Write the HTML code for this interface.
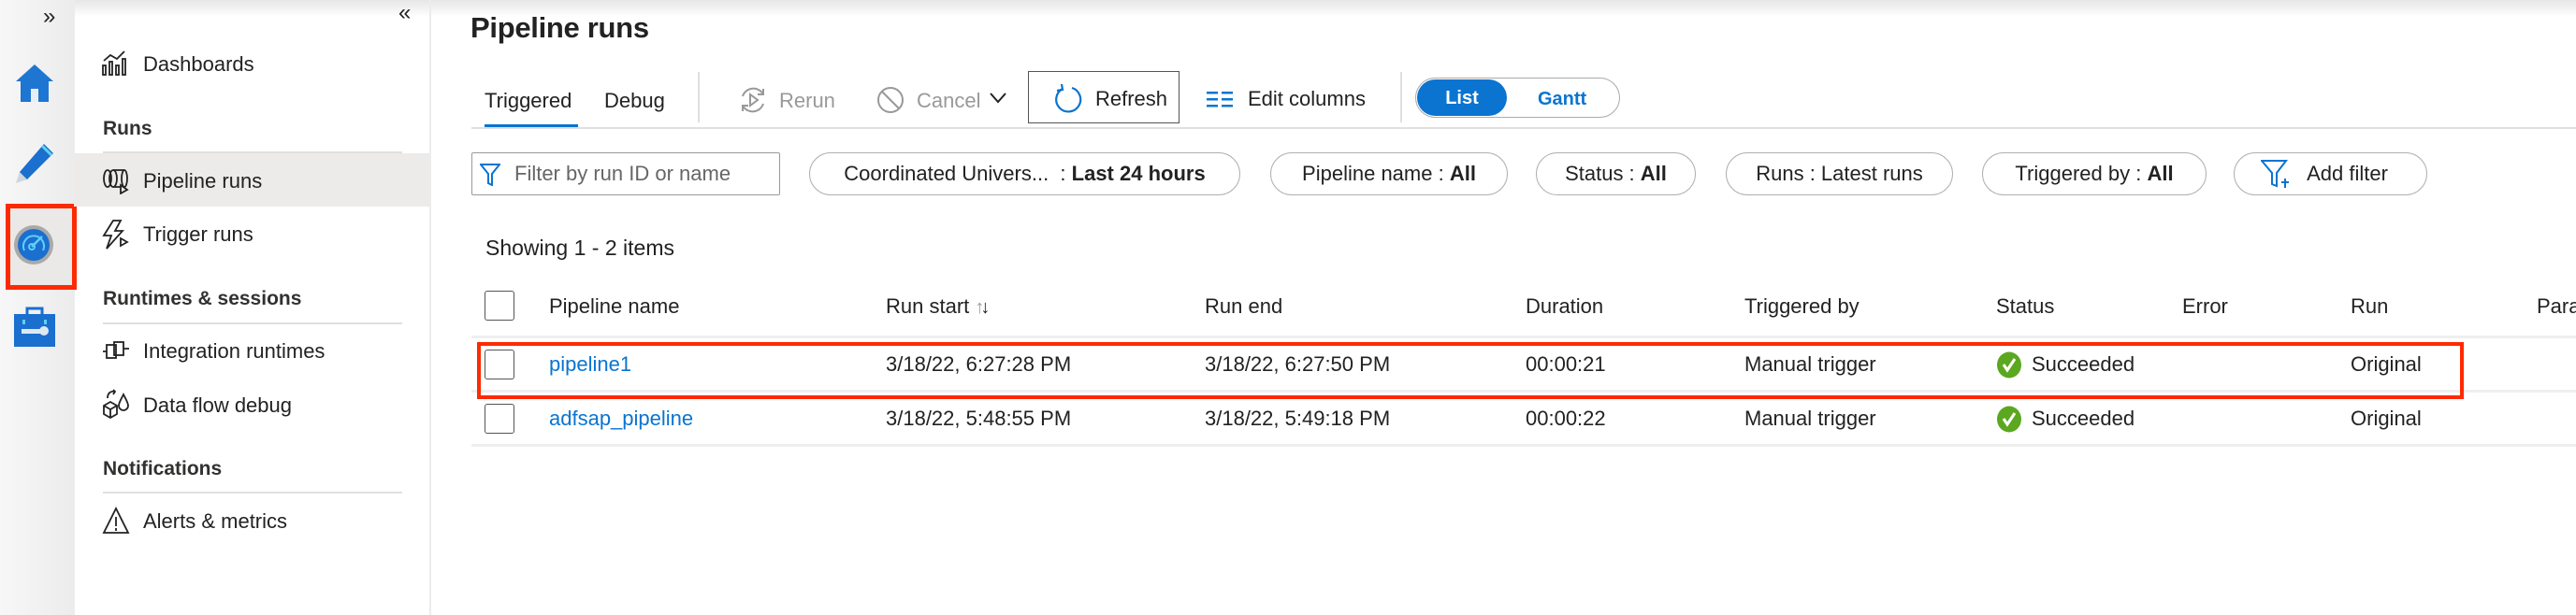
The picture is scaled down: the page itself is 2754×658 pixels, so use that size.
<!DOCTYPE html>
<html><head><meta charset="utf-8"><style>
*{margin:0;padding:0;box-sizing:border-box}
body{width:2754px;height:658px;overflow:hidden;background:#fff;font-family:"Liberation Sans",sans-serif;color:#222;position:relative}
.a{position:absolute;white-space:nowrap}
.t{font-size:22px;line-height:30px}
.h{font-size:21px;font-weight:bold;line-height:30px;color:#323130}
.line{position:absolute;background:#e1dfdd;height:2px}
.pill{position:absolute;top:163px;height:46px;border:1.5px solid #b0b0b0;border-radius:23px;font-size:22px;line-height:43px;text-align:center;color:#222}
.cb{position:absolute;width:32px;height:32px;border:1.5px solid #555;border-radius:3px;background:#fff}
.c{position:absolute;font-size:22px;line-height:30px;white-space:nowrap;color:#222}
.lnk{color:#0a74d0}
</style></head><body>
<div class="a" style="left:0;top:0;width:2754px;height:18px;background:linear-gradient(#e6e6e6,rgba(255,255,255,0))"></div>
<div class="a" style="left:0;top:0;width:80px;height:658px;background:linear-gradient(90deg,#f7f7f7,#ececec)"></div>
<div class="a" style="left:46px;top:4px;font-size:24px;color:#222">»</div>
<svg class="a" style="left:15px;top:67px" width="44" height="43" viewBox="0 0 44 43"><path d="M22 2 L42 20 L37 20 L37 42 L7 42 L7 20 L2 20 Z" fill="#1e76d2"/><rect x="18" y="28" width="8" height="14" fill="#e8eef6"/></svg>
<svg class="a" style="left:15px;top:152px" width="44" height="44" viewBox="0 0 44 44"><path d="M32 2 L42 12 L14 40 L4 42 L6 32 Z" fill="#1a6fcf"/><path d="M30 4 L40 14" stroke="#5fd0f5" stroke-width="3"/><path d="M6 32 L14 40 L2 44 Z" fill="#cfd6de"/></svg>
<div class="a" style="left:6px;top:218px;width:76px;height:92px;background:#eae9e8;border:5px solid #ff2a00"></div>
<svg class="a" style="left:14px;top:240px" width="44" height="44" viewBox="0 0 44 44"><circle cx="22" cy="22" r="21" fill="#a9a9a9"/><circle cx="22" cy="22" r="17" fill="#1a6fcf"/><path d="M12 28 A11 11 0 1 1 32 28" fill="none" stroke="#5fd0f5" stroke-width="2"/><path d="M20 24 L31 13" stroke="#5fd0f5" stroke-width="2.5"/><circle cx="20" cy="24" r="3" fill="none" stroke="#5fd0f5" stroke-width="2"/></svg>
<svg class="a" style="left:15px;top:328px" width="44" height="43" viewBox="0 0 44 43"><path d="M14 8 V2 H30 V8" fill="none" stroke="#1a6fcf" stroke-width="3"/><rect x="0" y="8" width="44" height="35" fill="#1a6fcf"/><rect x="8" y="24" width="22" height="5" fill="#dfe8f2"/><circle cx="32" cy="26" r="5" fill="#dfe8f2"/><rect x="9" y="14" width="3" height="5" fill="#5fd0f5"/><rect x="32" y="14" width="3" height="5" fill="#5fd0f5"/></svg>
<div class="a" style="left:459px;top:0;width:2px;height:658px;background:#ececec"></div>
<div class="a" style="left:426px;top:0;font-size:24px;color:#222">«</div>
<svg class="a" style="left:109px;top:53px" width="28" height="28" viewBox="0 0 28 28" fill="none" stroke="#222" stroke-width="1.8"><rect x="1" y="17" width="3" height="10"/><rect x="8" y="13" width="3" height="14"/><rect x="15" y="17" width="3" height="10"/><rect x="22" y="10" width="3" height="17"/><path d="M2 12 L9 6 L16 10 L24 2"/></svg>
<div class="a t" style="left:153px;top:54px">Dashboards</div>
<div class="a h" style="left:110px;top:123px">Runs</div>
<div class="line" style="left:110px;top:162px;width:320px"></div>
<div class="a" style="left:79px;top:164px;width:380px;height:57px;background:#edebe9"></div>
<svg class="a" style="left:109px;top:180px" width="30" height="28" viewBox="0 0 30 28" fill="none" stroke="#222" stroke-width="1.8"><ellipse cx="6" cy="11" rx="4" ry="9"/><ellipse cx="12" cy="11" rx="4" ry="9"/><path d="M12 2 H24 M12 20 H20"/><ellipse cx="24" cy="11" rx="3" ry="9"/><path d="M20 18 L27 23 L20 27 Z"/></svg>
<div class="a t" style="left:153px;top:179px">Pipeline runs</div>
<svg class="a" style="left:109px;top:235px" width="30" height="32" viewBox="0 0 30 32" fill="none" stroke="#222" stroke-width="1.8"><path d="M12 1 L2 17 H10 L5 31 L22 12 H14 L20 1 Z"/><path d="M20 20 L27 24 L20 28 Z"/></svg>
<div class="a t" style="left:153px;top:236px">Trigger runs</div>
<div class="a h" style="left:110px;top:305px">Runtimes &amp; sessions</div>
<div class="line" style="left:110px;top:345px;width:320px"></div>
<svg class="a" style="left:109px;top:364px" width="30" height="24" viewBox="0 0 30 24" fill="none" stroke="#222" stroke-width="1.8"><rect x="5" y="5" width="10" height="14"/><rect x="13" y="2" width="10" height="14"/><path d="M1 12 H5 M23 9 H29"/></svg>
<div class="a t" style="left:153px;top:361px">Integration runtimes</div>
<svg class="a" style="left:109px;top:416px" width="30" height="32" viewBox="0 0 30 32" fill="none" stroke="#222" stroke-width="1.8"><path d="M2 18 L9 14 L16 18 L16 27 L9 31 L2 27 Z M2 18 L9 22 L16 18 M9 22 V31"/><path d="M23 6 C20 12 18 15 18 18 A5 5 0 0 0 28 18 C28 15 26 12 23 6Z"/><path d="M6 10 C6 4 10 2 14 3 M12 1 L14 3 L12 6"/></svg>
<div class="a t" style="left:153px;top:419px">Data flow debug</div>
<div class="a h" style="left:110px;top:487px">Notifications</div>
<div class="line" style="left:110px;top:526px;width:320px"></div>
<svg class="a" style="left:109px;top:542px" width="30" height="30" viewBox="0 0 30 30" fill="none" stroke="#222" stroke-width="1.8"><path d="M15 2 L28 28 H2 Z M15 11 V21 M15 23 V26"/></svg>
<div class="a t" style="left:153px;top:543px">Alerts &amp; metrics</div>
<div class="a" style="left:503px;top:12px;font-size:31px;font-weight:bold;color:#222;letter-spacing:-0.3px">Pipeline runs</div>
<div class="a t" style="left:518px;top:93px">Triggered</div>
<div class="a" style="left:518px;top:133px;width:100px;height:4px;background:#0a74d0"></div>
<div class="a t" style="left:646px;top:93px">Debug</div>
<div class="a" style="left:746px;top:77px;width:2px;height:54px;background:#e1dfdd"></div>
<div class="line" style="left:504px;top:136px;width:2250px"></div>
<svg class="a" style="left:789px;top:91px" width="32" height="32" viewBox="0 0 32 32" fill="none" stroke="#999" stroke-width="2"><path d="M5 12 A12 12 0 0 1 27 10 M27 20 A12 12 0 0 1 5 22 M27 4 V10 H21 M5 28 V22 H11"/><path d="M13 10 L21 16 L13 22 Z"/></svg>
<div class="a t" style="left:833px;top:93px;color:#999">Rerun</div>
<svg class="a" style="left:936px;top:91px" width="32" height="32" viewBox="0 0 32 32" fill="none" stroke="#999" stroke-width="2"><circle cx="16" cy="16" r="13"/><path d="M7 7 L25 25"/></svg>
<div class="a t" style="left:980px;top:93px;color:#999">Cancel</div>
<svg class="a" style="left:1057px;top:98px" width="20" height="14" viewBox="0 0 20 14" fill="none" stroke="#222" stroke-width="2"><path d="M2 2 L10 11 L18 2"/></svg>
<div class="a" style="left:1099px;top:76px;width:162px;height:56px;border:1.5px solid #555"></div>
<svg class="a" style="left:1126px;top:88px" width="32" height="34" viewBox="0 0 32 34" fill="none" stroke="#0a74d0" stroke-width="2.2"><path d="M10 7 A13 13 0 1 0 20 6"/><path d="M9 2 L10 8 L4 9"/></svg>
<div class="a t" style="left:1171px;top:91px">Refresh</div>
<svg class="a" style="left:1290px;top:96px" width="30" height="20" viewBox="0 0 30 20" fill="#0a74d0"><rect x="0" y="2" width="12" height="2.5"/><rect x="16" y="2" width="12" height="2.5"/><rect x="0" y="9" width="12" height="2.5"/><rect x="16" y="9" width="12" height="2.5"/><rect x="0" y="16" width="12" height="2.5"/><rect x="16" y="16" width="12" height="2.5"/></svg>
<div class="a t" style="left:1334px;top:91px">Edit columns</div>
<div class="a" style="left:1497px;top:77px;width:2px;height:54px;background:#e1dfdd"></div>
<div class="a" style="left:1513px;top:83px;width:219px;height:43px;border:1.5px solid #aaa;border-radius:22px"></div>
<div class="a" style="left:1515px;top:85px;width:96px;height:39px;background:#0a74d0;border-radius:20px;color:#fff;font-size:20px;font-weight:bold;line-height:41px;text-align:center">List</div>
<div class="a" style="left:1644px;top:93px;font-size:20px;font-weight:bold;color:#0a74d0;line-height:26px">Gantt</div>
<div class="a" style="left:504px;top:163px;width:330px;height:46px;border:1.5px solid #999;border-radius:2px"></div>
<svg class="a" style="left:513px;top:175px" width="22" height="24" viewBox="0 0 22 24" fill="none" stroke="#0a74d0" stroke-width="2"><path d="M1 1 H21 L13 11 V23 L9 21 V11 Z"/></svg>
<div class="a t" style="left:550px;top:171px;color:#666">Filter by run ID or name</div>
<div class="pill" style="left:865px;width:461px">Coordinated Univers...&nbsp; : <b>Last 24 hours</b></div>
<div class="pill" style="left:1358px;width:254px">Pipeline name : <b>All</b></div>
<div class="pill" style="left:1642px;width:171px">Status : <b>All</b></div>
<div class="pill" style="left:1845px;width:243px">Runs : Latest runs</div>
<div class="pill" style="left:2119px;width:240px">Triggered by : <b>All</b></div>
<div class="pill" style="left:2388px;width:207px;padding-left:36px">Add filter</div>
<svg class="a" style="left:2417px;top:171px" width="30" height="32" viewBox="0 0 30 32" fill="none" stroke="#0a74d0" stroke-width="2"><path d="M1 1 H27 L17 14 V28 L12 26 V14 Z"/><path d="M22 24 H30 M26 20 V30"/></svg>
<div class="a" style="left:519px;top:250px;font-size:23px;line-height:30px">Showing 1 - 2 items</div>
<div class="cb" style="left:518px;top:311px"></div>
<div class="c" style="left:587px;top:313px">Pipeline name</div>
<div class="c" style="left:947px;top:313px">Run start <span style="color:#999;font-size:20px">↑</span><span style="font-size:20px;margin-left:-4px">↓</span></div>
<div class="c" style="left:1288px;top:313px">Run end</div>
<div class="c" style="left:1631px;top:313px">Duration</div>
<div class="c" style="left:1865px;top:313px">Triggered by</div>
<div class="c" style="left:2134px;top:313px">Status</div>
<div class="c" style="left:2333px;top:313px">Error</div>
<div class="c" style="left:2513px;top:313px">Run</div>
<div class="c" style="left:2712px;top:313px">Para</div>
<div class="a" style="left:504px;top:359px;width:2250px;height:3px;background:#efefef"></div>
<div class="cb" style="left:518px;top:374px"></div>
<div class="c lnk" style="left:587px;top:375px">pipeline1</div>
<div class="c" style="left:947px;top:375px">3/18/22, 6:27:28 PM</div>
<div class="c" style="left:1288px;top:375px">3/18/22, 6:27:50 PM</div>
<div class="c" style="left:1631px;top:375px">00:00:21</div>
<div class="c" style="left:1865px;top:375px">Manual trigger</div>
<svg class="a" style="left:2134px;top:376px" width="28" height="29" viewBox="0 0 28 29"><ellipse cx="14" cy="14.5" rx="13" ry="14" fill="#5ba820"/><path d="M8 14 L12 20 L20 8" fill="none" stroke="#fff" stroke-width="3"/></svg>
<div class="c" style="left:2172px;top:375px">Succeeded</div>
<div class="c" style="left:2513px;top:375px">Original</div>
<div class="a" style="left:504px;top:417px;width:2250px;height:3px;background:#efefef"></div>
<div class="cb" style="left:518px;top:432px"></div>
<div class="c lnk" style="left:587px;top:433px">adfsap_pipeline</div>
<div class="c" style="left:947px;top:433px">3/18/22, 5:48:55 PM</div>
<div class="c" style="left:1288px;top:433px">3/18/22, 5:49:18 PM</div>
<div class="c" style="left:1631px;top:433px">00:00:22</div>
<div class="c" style="left:1865px;top:433px">Manual trigger</div>
<svg class="a" style="left:2134px;top:434px" width="28" height="29" viewBox="0 0 28 29"><ellipse cx="14" cy="14.5" rx="13" ry="14" fill="#5ba820"/><path d="M8 14 L12 20 L20 8" fill="none" stroke="#fff" stroke-width="3"/></svg>
<div class="c" style="left:2172px;top:433px">Succeeded</div>
<div class="c" style="left:2513px;top:433px">Original</div>
<div class="a" style="left:504px;top:475px;width:2250px;height:3px;background:#efefef"></div>
<div class="a" style="left:510px;top:366px;width:2124px;height:61px;border:4.5px solid #ff2a00"></div>
</body></html>
